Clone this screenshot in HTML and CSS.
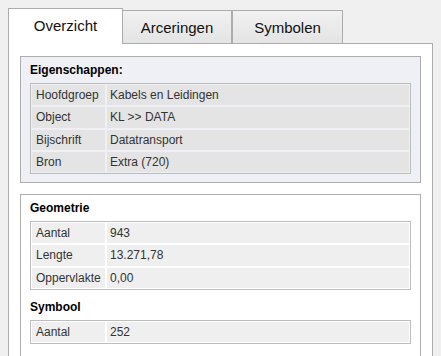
FILE: index.html
```html
<!DOCTYPE html>
<html lang="nl">
<head>
<meta charset="utf-8">
<title>Eigenschappen</title>
<link rel="stylesheet" href="styles.css">
</head>
<body>
<div class="page">
  <div class="tabs">
    <div class="tab active">Overzicht</div>
    <div class="tab tab-2">Arceringen</div>
    <div class="tab tab-3">Symbolen</div>
  </div>
  <div class="panel">
    <div class="group group-props">
      <div class="title">Eigenschappen:</div>
      <table class="grid grid-props">
        <tr><td class="key">Hoofdgroep</td><td>Kabels en Leidingen</td></tr>
        <tr><td class="key">Object</td><td>KL &gt;&gt; DATA</td></tr>
        <tr><td class="key">Bijschrift</td><td>Datatransport</td></tr>
        <tr><td class="key">Bron</td><td>Extra (720)</td></tr>
      </table>
    </div>
    <div class="group group-stats">
      <div class="title">Geometrie</div>
      <table class="grid">
        <tr><td class="key">Aantal</td><td>943</td></tr>
        <tr><td class="key">Lengte</td><td>13.271,78</td></tr>
        <tr><td class="key">Oppervlakte</td><td>0,00</td></tr>
      </table>
      <div class="title title-sub">Symbool</div>
      <table class="grid">
        <tr><td class="key">Aantal</td><td>252</td></tr>
      </table>
    </div>
  </div>
</div>
</body>
</html>
```
FILE: styles.css
```css
html, body {
  margin: 0;
  padding: 0;
  overflow: hidden;
  background: #f0f0f0;
  font-family: "Liberation Sans", Arial, sans-serif;
  color: #222;
}

.page {
  padding: 8px 8px 0 8px;
}

.tabs {
  display: flex;
  align-items: flex-end;
  height: 35px;
}

.tab {
  box-sizing: border-box;
  height: 33px;
  width: 110px;
  border: 1px solid #acacac;
  border-bottom: none;
  background: linear-gradient(#f1f1f1, #e4e4e4);
  font-size: 15px;
  line-height: 17px;
  padding-top: 8px;
  text-align: center;
  color: #111;
}

.tab.active {
  position: relative;
  z-index: 1;
  width: 115px;
  height: 36px;
  margin-bottom: -1px;
  background: #fff;
}

.tab-2 {
  margin-left: -1px;
}

.tab-3 {
  width: 111px;
}

.panel {
  border: 1px solid #acacac;
  border-bottom: none;
  background: #fff;
  padding: 12px 11px 0 11px;
  height: 400px;
}

.group {
  border: 1px solid #adadad;
  padding: 6px 9px 8px 9px;
}

.group-props {
  background: #eff0f5;
  margin-bottom: 11px;
}

.group-stats {
  background: #fff;
  padding-bottom: 20px;
}

.title {
  font-size: 12px;
  font-weight: bold;
  line-height: 14px;
  color: #000;
  margin-bottom: 6px;
}

.title-sub {
  margin-top: 10px;
}

.grid {
  width: 100%;
  border: 1px solid #bdbdbd;
  border-collapse: separate;
  border-spacing: 0;
  font-size: 12px;
}

.grid td {
  border: 1px solid #fff;
  background: #efefef;
  padding: 3px 4px 3px 3px;
  line-height: 14.3px;
  color: #333;
}

.grid-props td {
  border-color: #eff0f5;
  background: #e4e4e4;
}

.grid td.key {
  width: 65px;
  padding-left: 4px;
}
```
